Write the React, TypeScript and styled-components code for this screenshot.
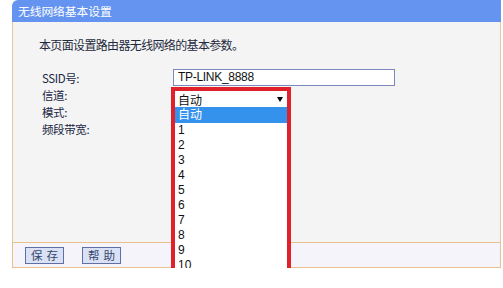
import React from 'react';
import styled, { createGlobalStyle } from 'styled-components';

const GlobalStyle = createGlobalStyle`
    html, body {
        margin: 0;
        padding: 0;
        overflow: hidden;
        background: #ffffff;
        font-family: "Noto Sans CJK SC", "Liberation Sans", sans-serif;
        color: #1f2a3d;
    }
`;

const Panel = styled.div`
    margin-left: 12px;
    width: 489px;
`;

const Header = styled.div`
    height: 22px;
    background: #6494ef;
    border-top-left-radius: 6px;
    color: #ffffff;
    font-size: 11.8px;
    line-height: 22px;
    padding-left: 6px;
    letter-spacing: -0.1px;
`;

const Body = styled.div`
    height: 220px;
    box-sizing: border-box;
    background: #f4f4f4;
    border-left: 1px solid #e7c79b;
    border-right: 1px solid #e7c79b;
    padding: 14px 0 0 26px;
`;

const Intro = styled.div`
    font-size: 12px;
    line-height: 17px;
    letter-spacing: -0.65px;
`;

const Form = styled.div`
    margin-top: 16px;
    padding-left: 3px;
    display: grid;
    grid-template-columns: 131px 1fr;
    grid-auto-rows: 17px;
`;

const Label = styled.div`
    font-size: 11.5px;
    line-height: 19px;
    letter-spacing: -0.4px;
    color: #1a2844;
`;

const Field = styled.div`
    position: relative;
`;

const TextInput = styled.div`
    width: 222px;
    height: 17px;
    box-sizing: border-box;
    border: 1px solid #7c88bb;
    background: #ffffff;
    font-family: "Liberation Sans", Arial, sans-serif;
    font-size: 12px;
    line-height: 15px;
    padding-left: 4px;
    color: #111;
    letter-spacing: -0.3px;
`;

const Dropdown = styled.div`
    position: absolute;
    left: -2px;
    top: 1px;
    width: 120px;
    height: 201px;
    overflow: hidden;
    box-sizing: border-box;
    border: 4px solid #e0202b;
    border-bottom: none;
    background: #ffffff;
    z-index: 2;
`;

const Closed = styled.div`
    height: 16px;
    display: flex;
    align-items: center;
    justify-content: space-between;
    padding: 0 4px 0 3px;
    font-size: 12px;
    color: #111;
`;

const Arrow = styled.span`
    width: 0;
    height: 0;
    border-left: 3px solid transparent;
    border-right: 3px solid transparent;
    border-top: 5px solid #000;
`;

const Option = styled.div<{ $active?: boolean }>`
    height: ${p => (p.$active ? 16 : 15)}px;
    line-height: ${p => (p.$active ? 17 : 15)}px;
    padding-left: 3px;
    font-family: "Liberation Sans", "Noto Sans CJK SC", Arial, sans-serif;
    font-size: 12px;
    background: ${p => (p.$active ? '#3592ec' : '#ffffff')};
    color: ${p => (p.$active ? '#ffffff' : '#111111')};
`;

const Footer = styled.div`
    height: 26px;
    box-sizing: border-box;
    background: #f4f4fa;
    border: 1px solid #e9c08c;
    display: flex;
    align-items: flex-start;
    gap: 18px;
    padding: 4px 0 0 12px;
`;

const Button = styled.div`
    width: 39px;
    height: 17px;
    box-sizing: border-box;
    background: #dae1f4;
    border: 1px solid #5f70a8;
    font-size: 11.5px;
    line-height: 15px;
    text-align: center;
    letter-spacing: 4px;
    text-indent: 4px;
    color: #34466b;
`;

const channels = ['1', '2', '3', '4', '5', '6', '7', '8', '9', '10', '11'];

const App: React.FC = () => {
    return (
        <>
            <GlobalStyle />
            <Panel>
                <Header>无线网络基本设置</Header>
                <Body>
                    <Intro>本页面设置路由器无线网络的基本参数。</Intro>
                    <Form>
                        <Label>SSID号:</Label>
                        <Field>
                            <TextInput>TP-LINK_8888</TextInput>
                        </Field>
                        <Label>信道:</Label>
                        <Field>
                            <Dropdown>
                                <Closed>
                                    <span>自动</span>
                                    <Arrow />
                                </Closed>
                                <Option $active>自动</Option>
                                {channels.map(c => (
                                    <Option key={c}>{c}</Option>
                                ))}
                            </Dropdown>
                        </Field>
                        <Label>模式:</Label>
                        <Field />
                        <Label>频段带宽:</Label>
                        <Field />
                    </Form>
                </Body>
                <Footer>
                    <Button>保存</Button>
                    <Button>帮助</Button>
                </Footer>
            </Panel>
        </>
    );
};

export default App;
